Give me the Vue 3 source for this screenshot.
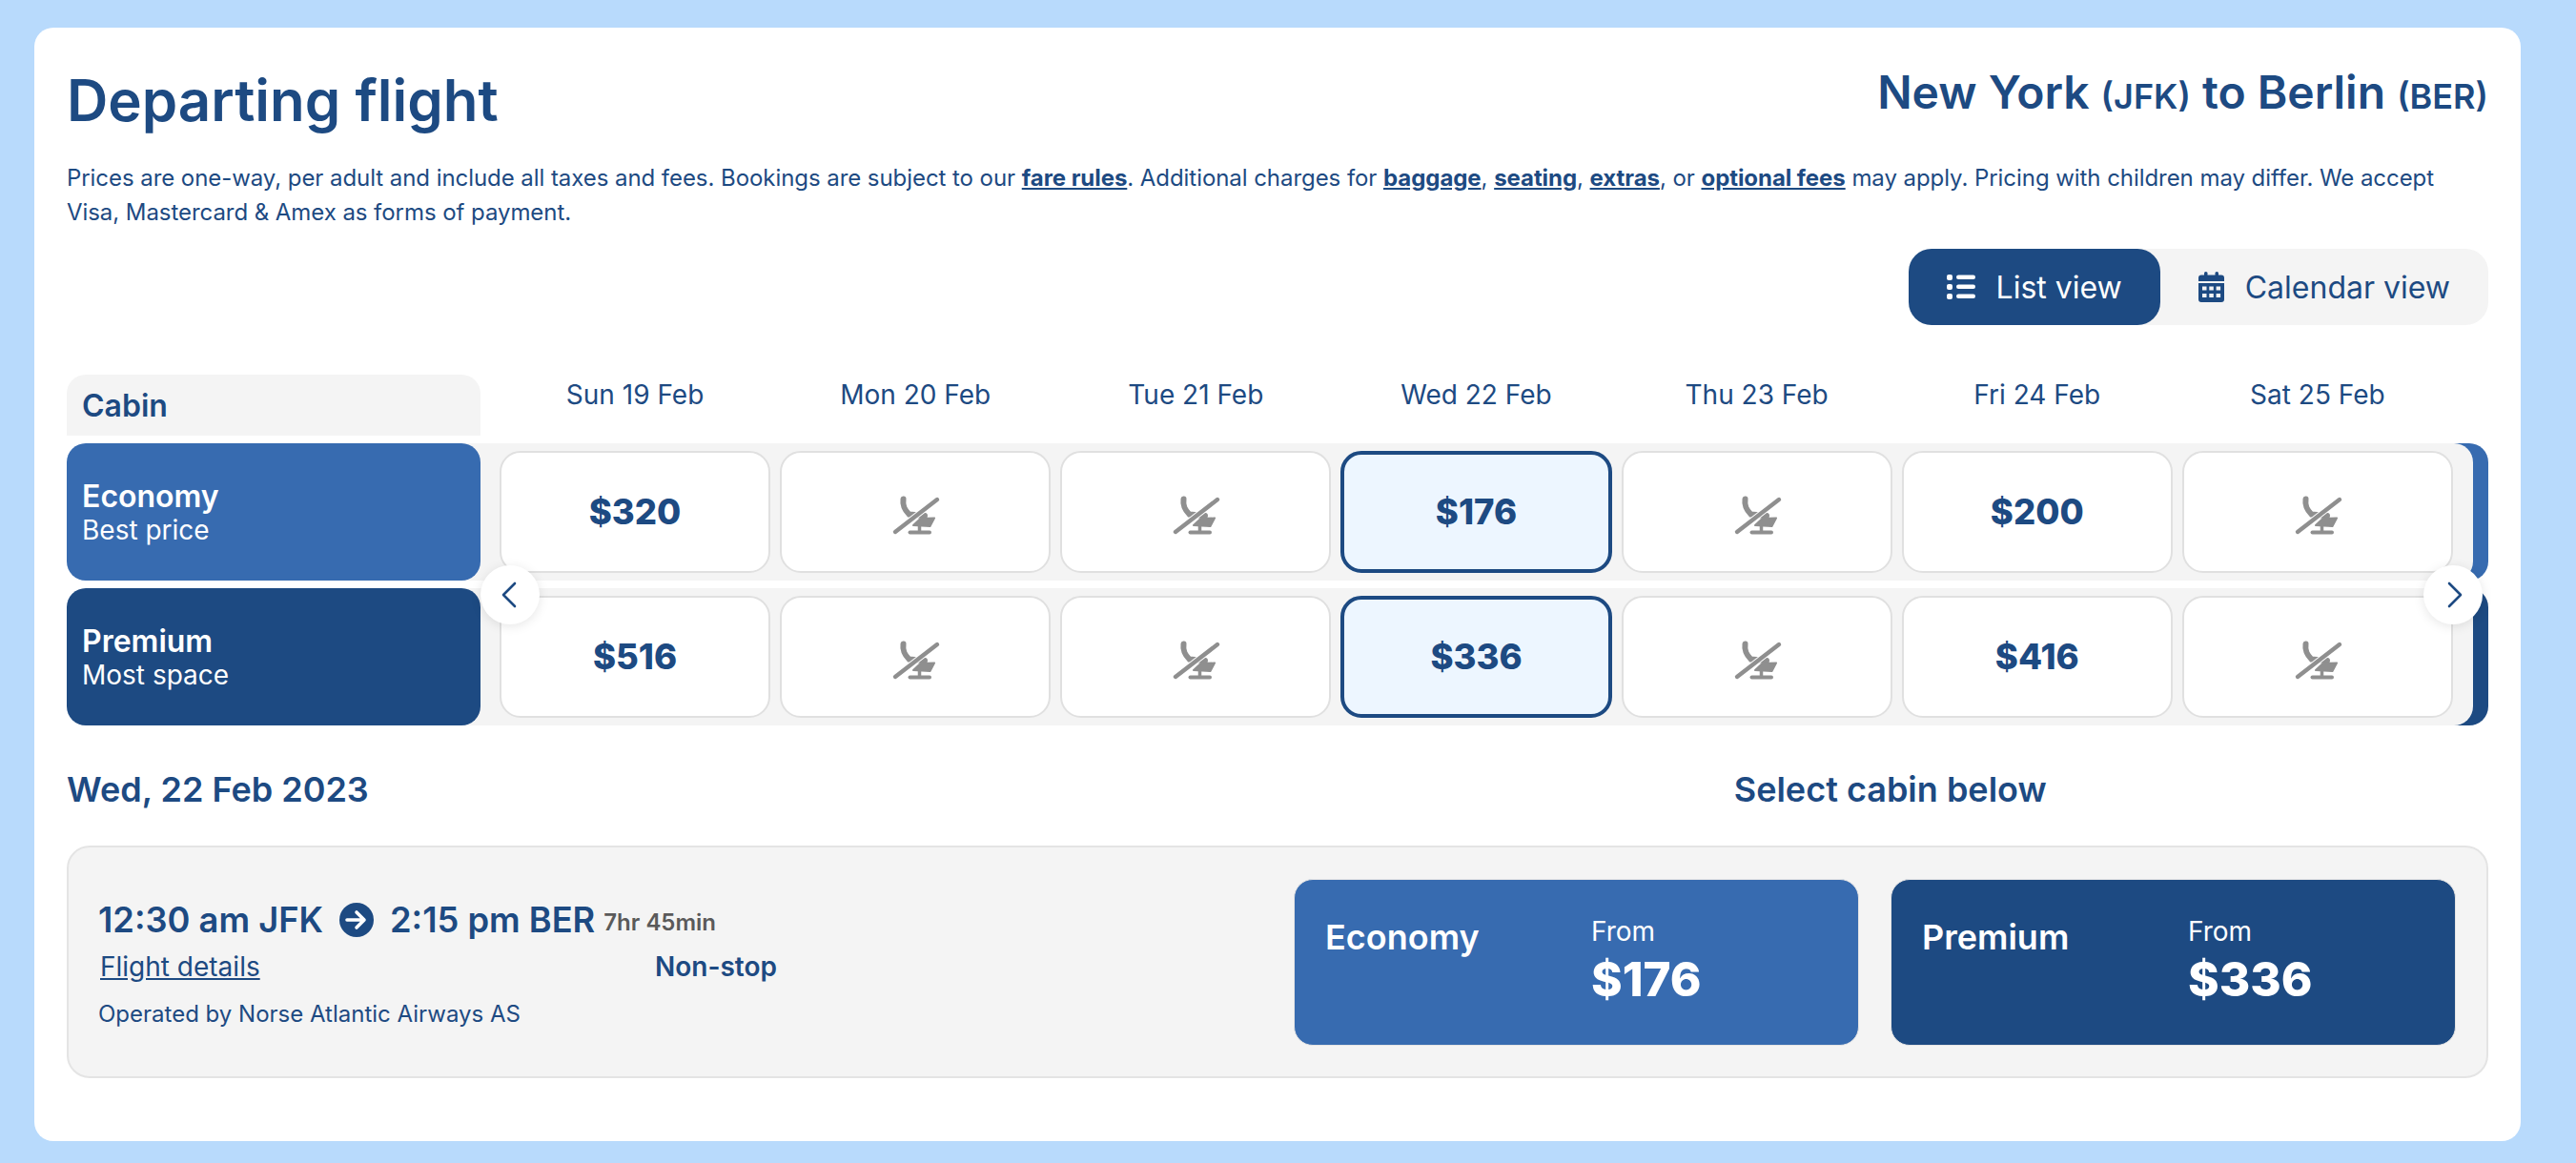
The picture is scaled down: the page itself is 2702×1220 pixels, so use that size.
<script setup>
import { ref } from "vue";

const days = ["Sun 19 Feb", "Mon 20 Feb", "Tue 21 Feb", "Wed 22 Feb", "Thu 23 Feb", "Fri 24 Feb", "Sat 25 Feb"];

const cabins = [
  { name: "Economy", note: "Best price", tone: "light", from: "$176", prices: ["$320", null, null, "$176", null, "$200", null] },
  { name: "Premium", note: "Most space", tone: "dark", from: "$336", prices: ["$516", null, null, "$336", null, "$416", null] },
];

const selectedDay = ref(3);
const view = ref("list");
</script>

<template>
  <main class="page">
    <section class="card">
      <header class="head">
        <h1>Departing flight</h1>
        <h2 class="route">New York <small>(JFK)</small> to Berlin <small>(BER)</small></h2>
      </header>

      <p class="terms">
        Prices are one-way, per adult and include all taxes and fees. Bookings are subject to our
        <a href="#">fare rules</a>. Additional charges for <a href="#">baggage</a>, <a href="#">seating</a>,
        <a href="#">extras</a>, or <a href="#">optional fees</a> may apply. Pricing with children may differ. We accept
        Visa, Mastercard &amp; Amex as forms of payment.
      </p>

      <div class="toggle-wrap">
        <div class="toggle">
          <button type="button" class="toggle-btn" :class="{ active: view === 'list' }" @click="view = 'list'">
            <svg width="30" height="26" viewBox="0 0 30 26" fill="currentColor">
              <rect x="0" y="0" width="6" height="6" rx="2" />
              <rect x="0" y="10" width="6" height="6" rx="2" />
              <rect x="0" y="20" width="6" height="6" rx="2" />
              <rect x="10" y="0.5" width="20" height="4.5" rx="2.2" />
              <rect x="10" y="10.5" width="20" height="4.5" rx="2.2" />
              <rect x="10" y="20.5" width="20" height="4.5" rx="2.2" />
            </svg>
            List view
          </button>
          <button type="button" class="toggle-btn" :class="{ active: view === 'calendar' }" @click="view = 'calendar'">
            <svg width="27" height="32" viewBox="0 0 27 32" fill="currentColor">
              <rect x="6" y="0" width="3.5" height="7" rx="1.6" />
              <rect x="17.5" y="0" width="3.5" height="7" rx="1.6" />
              <path d="M3 3.500h21a3 3 0 0 1 3 3v3.500H0V6.500a3 3 0 0 1 3-3z" />
              <path fill-rule="evenodd" d="M0 12h27v17a3 3 0 0 1-3 3H3a3 3 0 0 1-3-3z M4 15.500v4h4.500v-4z M11.300 15.500v4h4.500v-4z M18.600 15.500v4h4.500v-4z M4 23v4h4.500v-4z M11.300 23v4h4.500v-4z M18.600 23v4h4.500v-4z" />
            </svg>
            Calendar view
          </button>
        </div>
      </div>

      <div class="board">
        <div class="board-row">
          <div class="cabin-head">Cabin</div>
          <div class="days">
            <span v-for="d in days" :key="d">{{ d }}</span>
          </div>
        </div>

        <div v-for="c in cabins" :key="c.name" class="board-row">
          <div class="cabin-label" :class="c.tone">
            <strong>{{ c.name }}</strong>
            <span>{{ c.note }}</span>
          </div>
          <div class="track" :class="c.tone">
            <div class="cells">
              <button
                v-for="(p, i) in c.prices"
                :key="i"
                type="button"
                class="cell"
                :class="{ selected: i === selectedDay }"
                @click="p && (selectedDay = i)"
              >
                <template v-if="p">{{ p }}</template>
                <svg v-else class="no-seat" width="80" height="70" viewBox="0 0 80 70" fill="none" stroke="#8f8f8f">
                  <path d="M27.500 17.500C26.500 25 29 29 33.500 33.500L50 35" stroke-width="6" stroke-linecap="round" />
                  <path d="M45.500 38L38 45L55.500 46L60 37.500Z" fill="#8f8f8f" stroke-width="2" stroke-linejoin="round" />
                  <path d="M44.500 45v6.500" stroke-width="3.500" />
                  <path d="M34.500 52.500H55" stroke-width="4" stroke-linecap="round" />
                  <path d="M19 52L63 18" stroke="#fff" stroke-width="6.500" />
                  <path d="M19 52L63 18" stroke-width="4.400" stroke-linecap="round" />
                </svg>
              </button>
            </div>
          </div>
        </div>

        <button type="button" class="nav prev" aria-label="Previous">
          <svg width="16" height="28" viewBox="0 0 16 28" fill="none" stroke="currentColor" stroke-width="2.600" stroke-linecap="round" stroke-linejoin="round">
            <path d="M14 2L2 14l12 12" />
          </svg>
        </button>
        <button type="button" class="nav next" aria-label="Next">
          <svg width="16" height="28" viewBox="0 0 16 28" fill="none" stroke="currentColor" stroke-width="2.600" stroke-linecap="round" stroke-linejoin="round">
            <path d="M2 2l12 12L2 26" />
          </svg>
        </button>
      </div>

      <div class="sub-head">
        <h3>Wed, 22 Feb 2023</h3>
        <h3 class="select-title">Select cabin below</h3>
      </div>

      <article class="flight">
        <div class="flight-info">
          <div class="times">
            <span>12:30 am JFK</span>
            <svg width="36" height="36" viewBox="0 0 36 36">
              <circle cx="18" cy="18" r="18" fill="#1d4a82" />
              <path d="M8 18h17M18 10l8 8-8 8" fill="none" stroke="#fff" stroke-width="3.600" stroke-linecap="round" stroke-linejoin="round" />
            </svg>
            <span>2:15 pm BER</span>
            <em>7hr 45min</em>
          </div>
          <div class="details">
            <a href="#">Flight details</a>
            <b>Non-stop</b>
          </div>
          <p class="operator">Operated by Norse Atlantic Airways AS</p>
        </div>
        <div class="fares">
          <button v-for="c in cabins" :key="c.name" type="button" class="fare" :class="c.tone">
            <span class="fare-name">{{ c.name }}</span>
            <span class="fare-price">
              <span>From</span>
              <strong>{{ c.from }}</strong>
            </span>
          </button>
        </div>
      </article>
    </section>
  </main>
</template>

<style>
body { background: #b8dafc; }
</style>

<style scoped>
.page {
  box-sizing: border-box;
  height: 1220px;
  padding: 29px 58px 23px 36px;
  font-family: Inter, "Liberation Sans", sans-serif;
  color: #1d4a82;
}
.card {
  box-sizing: border-box;
  height: 100%;
  background: #fff;
  border-radius: 20px;
  padding: 40px 34px 0;
}
.head { display: flex; justify-content: space-between; align-items: flex-start; }
h1 { margin: 0; font-size: 60px; line-height: 72px; font-weight: 600; }
.route { margin: 0; font-size: 48px; line-height: 56px; font-weight: 600; }
.route small { font-size: 36px; font-weight: 600; }
.terms { margin: 28px 0 0; font-size: 24px; line-height: 36px; letter-spacing: -0.06px; max-width: 2500px; }
.terms a { color: inherit; font-weight: 700; }
.toggle-wrap { display: flex; justify-content: flex-end; margin-top: 20px; }
.toggle { display: flex; background: #f4f4f4; border-radius: 24px; height: 80px; }
.toggle-btn {
  display: flex;
  align-items: center;
  gap: 22px;
  padding: 0 40px;
  border: 0;
  border-radius: 24px;
  background: transparent;
  color: #1d4a82;
  font: 400 32px Inter, sans-serif;
  cursor: pointer;
}
.toggle-btn.active { background: #1d4a82; color: #fff; }

.board { position: relative; margin-top: 52px; display: grid; gap: 8px; }
.board-row { display: grid; grid-template-columns: 434px 1fr; }
.cabin-head {
  height: 64px;
  box-sizing: border-box;
  padding: 13px 16px 0;
  background: #f4f4f4;
  border-radius: 20px 20px 0 0;
  font-size: 32px;
  line-height: 40px;
  font-weight: 600;
}
.days {
  display: grid;
  grid-template-columns: repeat(7, 1fr);
  gap: 10px;
  padding: 0 37px 0 20px;
  font-size: 28px;
  line-height: 42px;
  text-align: center;
}
.cabin-label {
  position: relative;
  z-index: 1;
  display: flex;
  flex-direction: column;
  justify-content: center;
  height: 144px;
  padding: 0 16px;
  box-sizing: border-box;
  border-radius: 20px;
  color: #fff;
}
.cabin-label strong { font-size: 32px; line-height: 38px; font-weight: 600; }
.cabin-label span { font-size: 28px; line-height: 33px; }
.light { background: #376bb0; }
.dark { background: #1d4a82; }
.track { margin-left: -20px; border-radius: 0 20px 20px 0; }
.cells {
  display: grid;
  grid-template-columns: repeat(7, 1fr);
  gap: 10px;
  height: 100%;
  box-sizing: border-box;
  margin-right: 16px;
  padding: 8px 21px 8px 40px;
  background: #f4f4f4;
  border-radius: 0 20px 20px 0;
}
.cell {
  display: flex;
  align-items: center;
  justify-content: center;
  min-width: 0;
  padding: 0;
  background: #fff;
  border: 2px solid #e0e0e0;
  border-radius: 22px;
  color: #1d4a82;
  font: 800 36.500px Inter, sans-serif;
  cursor: pointer;
}
.cell.selected { background: #edf6ff; border: 4px solid #1d4a82; }
.no-seat { margin-top: 7px; }
.nav {
  position: absolute;
  top: 200px;
  display: flex;
  align-items: center;
  justify-content: center;
  width: 62px;
  height: 62px;
  z-index: 2;
  padding: 0;
  border: 0;
  border-radius: 50%;
  background: #fff;
  color: #1d4a82;
  box-shadow: 0 2px 12px rgba(0, 0, 0, 0.1);
  cursor: pointer;
}
.prev { left: 434px; }
.prev svg { margin-right: 3px; }
.next { right: 6px; }
.next svg { margin-left: 3px; }

.sub-head { display: flex; margin-top: 44px; }
h3 { margin: 0; font-size: 36px; line-height: 46px; font-weight: 600; }
.select-title { margin-left: 1432px; }

.flight {
  box-sizing: border-box;
  display: flex;
  justify-content: space-between;
  height: 244px;
  margin-top: 36px;
  padding: 33px 32px 0 31px;
  background: #f4f4f4;
  border: 2px solid #e4e4e4;
  border-radius: 24px;
}
.flight-info { width: 800px; padding-top: 17px; }
.times { display: flex; align-items: center; gap: 17px; font-size: 36.250px; line-height: 46px; font-weight: 600; }
.times em { font-style: normal; font-size: 24px; color: #5a5a5a; margin: 6px 0 0 -8px; }
.details { display: flex; margin-top: 3px; font-size: 28px; line-height: 40px; }
.details a { width: 582px; padding-left: 2px; color: inherit; }
.details b { font-weight: 600; }
.operator { margin: 13px 0 0; font-size: 24px; line-height: 34px; }
.fares { display: flex; gap: 33px; }
.fare {
  box-sizing: border-box;
  display: flex;
  width: 593px;
  height: 175px;
  padding: 36px 32px;
  border: 1px solid #e4e4e4;
  border-radius: 20px;
  color: #fff;
  font-family: Inter, sans-serif;
  text-align: left;
  cursor: pointer;
}
.fare-name { width: 279px; padding-top: 2px; font-size: 36px; line-height: 44px; font-weight: 600; }
.fare-price { display: flex; flex-direction: column; }
.fare-price span { font-size: 28px; line-height: 36px; }
.fare-price strong { font-size: 49.500px; line-height: 64px; font-weight: 800; }
</style>
